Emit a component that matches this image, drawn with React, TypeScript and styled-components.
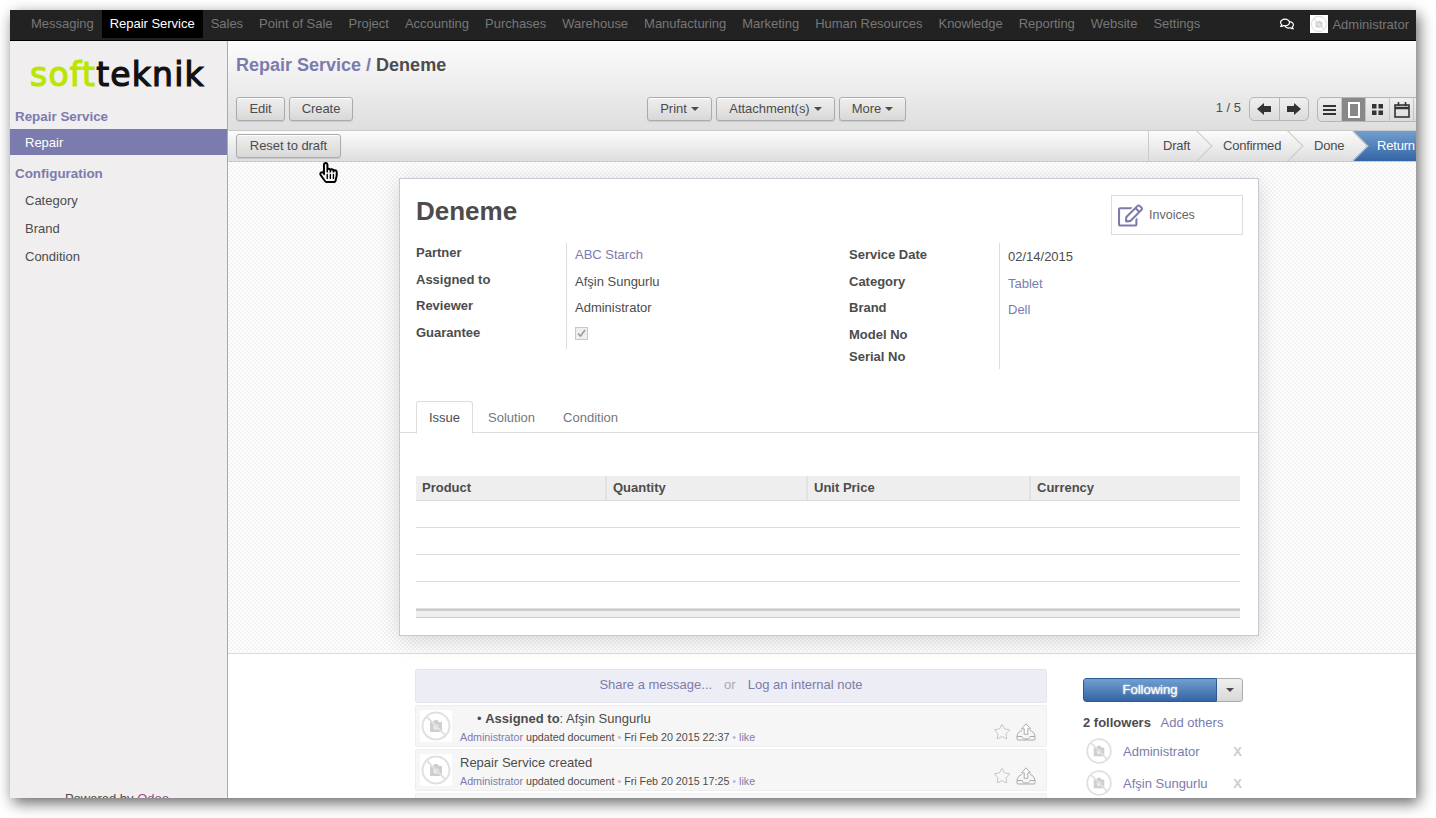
import styled, { createGlobalStyle } from "styled-components";
import { Star } from "lucide-react";
import { FaRegEdit, FaRegHandPointer, FaRegComments } from "react-icons/fa";

const GlobalStyle = createGlobalStyle`
  html, body {
    margin: 0;
    padding: 0;
    background: #fff;
  }
  body {
    font-family: "Liberation Sans", Arial, sans-serif;
    font-size: 13px;
    color: #4c4c4c;
  }
`;

const Page = styled.div`
  width: 1436px;
  height: 818px;
  padding: 10px 20px 20px 10px;
  box-sizing: border-box;
  overflow: hidden;
`;
const Frame = styled.div`
  position: relative;
  width: 1406px;
  height: 788px;
  display: flex;
  flex-direction: column;
  overflow: hidden;
  background: #fff;
`;
const FrameShadow = styled.div`
  width: 1406px;
  height: 788px;
  box-shadow: 3px 5px 14px rgba(0, 0, 0, 0.6);
`;

const TopBar = styled.div`
  height: 30px;
  flex: none;
  display: flex;
  align-items: flex-start;
  padding-left: 13px;
  background: #222;
  border-bottom: 1px solid #000;
  color: #777;
`;
const TopItem = styled.div<{ $active?: boolean }>`
  height: 28px;
  line-height: 28px;
  padding: 0 8px;
  letter-spacing: -0.02px;
  color: ${(p) => (p.$active ? "#fff" : "#777")};
  background: ${(p) => (p.$active ? "#000" : "transparent")};
`;
const TopRight = styled.div`
  margin-left: auto;
  display: flex;
  align-items: center;
  height: 28px;
  color: #777;
  padding-right: 7px;
`;
const ChatIcon = styled.span`
  display: flex;
  color: #fff;
  margin-right: 16px;
`;
const TopAvatar = styled.span`
  display: flex;
  width: 18px;
  height: 18px;
  background: #fff;
  margin-right: 4px;
`;

const Body = styled.div`
  flex: 1;
  min-height: 0;
  display: flex;
`;

const Sidebar = styled.aside`
  width: 217px;
  flex: none;
  display: flex;
  flex-direction: column;
  background: #f0eeee;
  border-right: 1px solid #aaa;
`;
const LogoBox = styled.div`
  height: 64px;
  box-sizing: border-box;
  padding: 15px 0 0 20px;
`;
const LogoText = styled.div`
  font-family: "DejaVu Sans", sans-serif;
  font-size: 33px;
  line-height: 38px;
  letter-spacing: 1.2px;
  white-space: nowrap;
  color: #111;
  -webkit-text-stroke: 1.2px currentColor;
  span {
    color: #b9e600;
  }
`;
const SideHeading = styled.div<{ $top: number }>`
  margin-top: ${(p) => p.$top}px;
  padding-left: 5px;
  height: 18px;
  line-height: 18px;
  font-size: 13.4px;
  font-weight: bold;
  color: #7c7bad;
`;
const SideItem = styled.div<{ $active?: boolean }>`
  height: ${(p) => (p.$active ? 26 : 28)}px;
  line-height: ${(p) => (p.$active ? 27 : 28)}px;
  padding-left: 15px;
  color: ${(p) => (p.$active ? "#fff" : "#4c4c4c")};
  background: ${(p) => (p.$active ? "#7c7bad" : "transparent")};
`;
const SideList = styled.div<{ $top: number }>`
  margin-top: ${(p) => p.$top}px;
`;
const Powered = styled.div`
  margin-top: auto;
  margin-bottom: -9px;
  padding-right: 3px;
  text-align: center;
  font-size: 13px;
  line-height: 16px;
  color: #4c4c4c;
  span {
    color: #a24689;
  }
`;

const Main = styled.main`
  flex: 1;
  min-width: 0;
  display: flex;
  flex-direction: column;
`;
const Header = styled.div`
  height: 90px;
  flex: none;
  box-sizing: border-box;
  padding: 13px 0 0 8px;
  background: linear-gradient(#fcfcfc, #dedede);
  border-bottom: 1px solid #cacaca;
`;
const Title = styled.h1`
  margin: 0;
  height: 22px;
  line-height: 22px;
  font-size: 18px;
  font-weight: bold;
  color: #4c4c4c;
  span {
    color: #7c7bad;
  }
  em {
    font-style: normal;
    color: #7c7bad;
  }
`;
const Toolbar = styled.div`
  margin-top: 21px;
  display: flex;
  align-items: flex-start;
`;
const Group = styled.div<{ $gap?: number; $left?: number }>`
  display: flex;
  gap: ${(p) => p.$gap ?? 4}px;
  margin-left: ${(p) => p.$left ?? 0}px;
`;
const Button = styled.button<{ $w: number }>`
  width: ${(p) => p.$w}px;
  height: 24px;
  padding: 0 0 2px;
  box-sizing: border-box;
  font: 13px "Liberation Sans", Arial, sans-serif;
  letter-spacing: -0.05px;
  color: #4c4c4c;
  border: 1px solid #ababab;
  border-radius: 3px;
  background: linear-gradient(#efefef, #d8d8d8);
  box-shadow: 0 1px 1px rgba(0, 0, 0, 0.1), inset 0 1px 0 #fff;
  white-space: nowrap;
`;
const Caret = styled.i`
  display: inline-block;
  margin-left: 4px;
  vertical-align: 2px;
  border-top: 4px solid #4c4c4c;
  border-left: 4px solid transparent;
  border-right: 4px solid transparent;
`;
const PagerText = styled.div`
  margin-left: auto;
  line-height: 22px;
  margin-right: 8px;
`;
const Pager = styled.div`
  display: flex;
  width: 60px;
  height: 24px;
  box-sizing: border-box;
  border: 1px solid #b5b5b5;
  border-radius: 5px;
  background: linear-gradient(#efefef, #dcdcdc);
  margin-right: 8px;
`;
const PagerCell = styled.div<{ $first?: boolean }>`
  flex: 1;
  display: flex;
  align-items: center;
  justify-content: center;
  color: #333;
  border-right: ${(p) => (p.$first ? "1px solid #b5b5b5" : "0")};
`;
const Views = styled.div`
  display: flex;
  height: 25px;
  box-sizing: border-box;
  border: 1px solid #b5b5b5;
  border-radius: 5px;
  margin-right: -23px;
  background: linear-gradient(#efefef, #dcdcdc);
`;
const ViewCell = styled.div<{ $active?: boolean }>`
  width: 24px;
  flex: none;
  display: flex;
  align-items: center;
  justify-content: center;
  box-sizing: border-box;
  border-right: 1px solid #c4c4c4;
  color: ${(p) => (p.$active ? "#fff" : "#333")};
  background: ${(p) => (p.$active ? "#888" : "transparent")};
  &:last-child {
    border-right: 0;
  }
`;

const StatusBar = styled.div`
  height: 31px;
  flex: none;
  box-sizing: border-box;
  display: flex;
  overflow: hidden;
  padding-left: 8px;
  background: linear-gradient(#fcfcfc, #dedede);
  border-bottom: 1px solid #cacaca;
`;
const ResetButton = styled(Button)`
  margin-top: 3px;
`;
const Steps = styled.div`
  margin-left: auto;
  margin-right: -19px;
  display: flex;
  border-left: 1px solid #cacaca;
`;
const Step = styled.div<{ $w: number; $left: number; $current?: boolean }>`
  position: relative;
  width: ${(p) => p.$w}px;
  height: 30px;
  line-height: 29px;
  flex: none;
  box-sizing: border-box;
  padding-left: ${(p) => p.$left}px;
  letter-spacing: -0.2px;
  white-space: nowrap;
  color: ${(p) => (p.$current ? "#fff" : "#4c4c4c")};
  background: ${(p) =>
    p.$current ? "linear-gradient(#729fcf, #3465a4)" : "transparent"};
  span {
    position: relative;
    z-index: 2;
  }
  &::after {
    content: ${(p) => (p.$current ? "none" : '""')};
    position: absolute;
    z-index: 1;
    top: 4px;
    right: -11px;
    width: 21px;
    height: 21px;
    transform: rotate(45deg);
    background: linear-gradient(135deg, #fafafa, #e0e0e0);
    border-top: 1px solid #cacaca;
    border-right: 1px solid #cacaca;
  }
`;

const Content = styled.div`
  height: 492px;
  flex: none;
  box-sizing: border-box;
  padding: 16px 0 0 171px;
  background: repeating-conic-gradient(#f3f3f3 0 25%, #fff 0 50%) 0 0 / 4px 4px;
  border-bottom: 1px solid #dcdcdc;
`;
const Sheet = styled.div`
  position: relative;
  width: 860px;
  height: 458px;
  box-sizing: border-box;
  background: #fff;
  border: 1px solid #c8c8d3;
  box-shadow: 0 4px 20px rgba(0, 0, 0, 0.15);
`;
const StatButton = styled.div`
  position: absolute;
  top: 16px;
  right: 15px;
  width: 132px;
  height: 40px;
  box-sizing: border-box;
  display: flex;
  align-items: center;
  gap: 6px;
  padding-left: 6px;
  border: 1px solid #ddd;
  font-size: 12.5px;
  color: #666;
  svg {
    color: #7c7bad;
  }
`;
const SheetTitle = styled.h2`
  margin: 0;
  padding: 17px 0 0 16px;
  height: 64px;
  box-sizing: border-box;
  font-size: 26px;
  line-height: 30px;
  color: #4c4c4c;
`;
const Fields = styled.div`
  display: flex;
  padding-left: 16px;
`;
const FieldGroup = styled.div<{ $w: number }>`
  width: ${(p) => p.$w}px;
  flex: none;
`;
const Row = styled.div<{ $h?: number }>`
  display: flex;
  height: ${(p) => p.$h ?? 26.5}px;
`;
const Label = styled.div<{ $w: number; $pad?: number }>`
  width: ${(p) => p.$w}px;
  flex: none;
  box-sizing: border-box;
  padding-top: ${(p) => p.$pad ?? 1}px;
  font-weight: bold;
  line-height: 18px;
  border-right: 1px solid #ddd;
`;
const Value = styled.div<{ $link?: boolean; $pad?: number }>`
  padding: ${(p) => p.$pad ?? 3}px 0 0 8px;
  line-height: 18px;
  color: ${(p) => (p.$link ? "#7c7bad" : "#4c4c4c")};
`;
const Check = styled.span`
  display: flex;
  width: 11px;
  height: 11px;
  margin-top: 3px;
  border: 1px solid #c8c8c8;
  background: #eee;
  color: #999;
`;
const Tabs = styled.div`
  display: flex;
  height: 31px;
  margin-top: 32px;
  padding-left: 16px;
  border-bottom: 1px solid #ddd;
`;
const Tab = styled.div<{ $active?: boolean }>`
  height: 31px;
  line-height: 31px;
  padding: 0 12px;
  margin-right: 2px;
  box-sizing: content-box;
  border-radius: 3px 3px 0 0;
  color: ${(p) => (p.$active ? "#4c4c4c" : "#777")};
  background: ${(p) => (p.$active ? "#fff" : "transparent")};
  border: 1px solid ${(p) => (p.$active ? "#ddd" : "transparent")};
  border-bottom: 1px solid ${(p) => (p.$active ? "#fff" : "transparent")};
`;
const Table = styled.div`
  margin: 43px 0 0 16px;
  width: 824px;
`;
const TableHead = styled.div`
  display: grid;
  grid-template-columns: 191px 201px 223px 1fr;
  height: 25px;
  box-sizing: border-box;
  background: #eee;
  border-bottom: 1px solid #ddd;
`;
const HeadCell = styled.div`
  padding-left: 6px;
  font-weight: bold;
  line-height: 23px;
  border-right: 2px solid #e2e2e2;
  &:last-child {
    border-right: 0;
  }
`;
const TableRow = styled.div`
  height: 27px;
  box-sizing: border-box;
  border-bottom: 1px solid #ddd;
`;
const TableFoot = styled.div`
  height: 9px;
  box-sizing: border-box;
  background: #eee;
  border-top: 2px solid #ccc;
  border-bottom: 1px solid #ccc;
`;

const Chatter = styled.div`
  flex: 1;
  min-height: 0;
  display: flex;
  padding: 15px 0 0 187px;
  overflow: hidden;
`;
const Thread = styled.div`
  width: 632px;
  flex: none;
`;
const Compose = styled.div`
  height: 34px;
  line-height: 30px;
  box-sizing: border-box;
  text-align: center;
  color: #aaa;
  background: #ededf6;
  border: 1px solid #e4e4ee;
  border-radius: 2px;
  a {
    color: #7c7bad;
  }
  span {
    margin: 0 12px;
  }
`;
const Message = styled.div`
  position: relative;
  height: 42px;
  box-sizing: border-box;
  display: flex;
  margin-top: 2px;
  padding: 4px 0 0 4px;
  background: #f6f6f6;
  border: 1px solid #eee;
  border-radius: 2px;
`;
const MessageAvatar = styled.div`
  width: 32px;
  height: 32px;
  flex: none;
  background: #fff;
`;
const MessageBody = styled.div`
  margin-left: 8px;
  flex: 1;
`;
const MessageText = styled.div<{ $indent?: number }>`
  height: 17px;
  line-height: 17px;
  padding-left: ${(p) => p.$indent ?? 0}px;
  color: #4c4c4c;
`;
const Meta = styled.div`
  margin-top: 3px;
  line-height: 14px;
  font-size: 10.7px;
  white-space: nowrap;
  a {
    color: #7c7bad;
  }
  i {
    font-style: normal;
    color: #b8b8d8;
  }
`;
const MessageIcons = styled.div`
  display: flex;
  align-items: center;
  gap: 5px;
  margin: 12px 10px 0 0;
  height: 20px;
  color: #b4b4b4;
`;

const Followers = styled.div`
  width: 160px;
  flex: none;
  margin: 9px 0 0 36px;
`;
const FollowButton = styled.div`
  display: flex;
  height: 24px;
  border-radius: 3px;
  overflow: hidden;
  box-sizing: border-box;
`;
const FollowMain = styled.div`
  flex: 1;
  text-align: center;
  line-height: 22px;
  color: #fff;
  text-shadow: 0 0 2px #fff;
  background: linear-gradient(#729fcf, #3465a4);
  border: 1px solid #2c5a94;
  border-radius: 3px 0 0 3px;
`;
const FollowCaret = styled.div`
  width: 26px;
  box-sizing: border-box;
  display: flex;
  align-items: center;
  justify-content: center;
  background: linear-gradient(#efefef, #d8d8d8);
  border: 1px solid #ababab;
  border-left: 0;
  border-radius: 0 3px 3px 0;
  i {
    margin-left: 0;
    vertical-align: baseline;
  }
`;
const FollowHead = styled.div`
  margin-top: 13px;
  line-height: 16px;
  font-weight: bold;
  white-space: nowrap;
  a {
    margin-left: 6px;
    font-weight: normal;
    color: #7c7bad;
  }
`;
const Follower = styled.div`
  display: flex;
  align-items: center;
  height: 32px;
  padding-left: 2px;
  a {
    margin-left: 10px;
    color: #7c7bad;
  }
`;
const FollowerList = styled.div`
  margin-top: 4px;
`;
const Remove = styled.span`
  margin-left: auto;
  padding-right: 1px;
  font-size: 13px;
  font-weight: bold;
  color: #ccc;
`;
const Cursor = styled.span`
  position: absolute;
  left: 308px;
  top: 152px;
  z-index: 5;
  display: flex;
  color: #000;
`;

function NoPhoto({ size }: { size: number }) {
  return (
    <svg width={size} height={size} viewBox="0 0 32 32">
      <circle cx="16" cy="16" r="13.5" fill="#fff" stroke="#e0e0e0" strokeWidth="2" />
      <path d="M10 12h3l1.500-2h3l1.500 2h3v10H10z" fill="#cfcfcf" />
      <circle cx="16" cy="17" r="2.600" fill="#eee" />
      <path d="M7 7l18 18" stroke="#e0e0e0" strokeWidth="2" />
    </svg>
  );
}

function ShareIcon() {
  return (
    <svg width="20" height="18" viewBox="0 0 20 18" fill="none" stroke="#aaa">
      <path d="M10 .8l4.500 5h-2.700v5.500H8.200V5.800H5.500z" fill="#fff" />
      <path d="M6 7.500C3.500 8 1.500 10 1 13.500v2.500c0 .6.400 1 1 1h16c.6 0 1-.4 1-1v-2.500C18.500 10 16.500 8 14 7.500" />
      <path d="M1 13.500h5c.5 2 2 2.500 4 2.500s3.500-.5 4-2.500h5" />
    </svg>
  );
}

function ArrowIcon({ dir }: { dir: "left" | "right" }) {
  return (
    <svg width="14" height="12" viewBox="0 0 14 12" fill="currentColor">
      {dir === "left" ? (
        <path d="M0 6l7-6v3h7v6H7v3z" />
      ) : (
        <path d="M14 6L7 0v3H0v6h7v3z" />
      )}
    </svg>
  );
}

function ListIcon() {
  return (
    <svg width="13" height="12" viewBox="0 0 13 12" fill="currentColor">
      <path d="M0 1h13v2H0zM0 5h13v2H0zM0 9h13v2H0z" />
    </svg>
  );
}

function FormIcon() {
  return (
    <svg width="12" height="16" viewBox="0 0 12 16" fill="none" stroke="currentColor" strokeWidth="2">
      <rect x="1" y="1" width="10" height="14" />
    </svg>
  );
}

function KanbanIcon() {
  return (
    <svg width="11" height="11" viewBox="0 0 11 11" fill="currentColor">
      <path d="M0 0h4.500v4.500H0zM6.500 0H11v4.500H6.500zM0 6.500h4.500V11H0zM6.500 6.500H11V11H6.500z" />
    </svg>
  );
}

function CalendarIcon() {
  return (
    <svg width="16" height="16" viewBox="0 0 16 16" fill="none" stroke="currentColor">
      <rect x="1" y="3" width="14" height="12" strokeWidth="1.600" />
      <path d="M1 6h14" strokeWidth="2.500" />
      <path d="M4.500 0v4M11.500 0v4" strokeWidth="1.600" />
    </svg>
  );
}

const menus = [
  "Messaging",
  "Repair Service",
  "Sales",
  "Point of Sale",
  "Project",
  "Accounting",
  "Purchases",
  "Warehouse",
  "Manufacturing",
  "Marketing",
  "Human Resources",
  "Knowledge",
  "Reporting",
  "Website",
  "Settings",
];

const messages = [
  { id: 1, indent: 17, time: "Fri Feb 20 2015 22:37" },
  { id: 2, indent: 0, time: "Fri Feb 20 2015 17:25" },
];

export default function App() {
  return (
    <>
      <GlobalStyle />
      <Page>
        <FrameShadow>
          <Frame>
            <TopBar>
              {menus.map((m) => (
                <TopItem key={m} $active={m === "Repair Service"}>
                  {m}
                </TopItem>
              ))}
              <TopRight>
                <ChatIcon>
                  <FaRegComments size={14} />
                </ChatIcon>
                <TopAvatar>
                  <NoPhoto size={18} />
                </TopAvatar>
                Administrator
              </TopRight>
            </TopBar>
            <Body>
              <Sidebar>
                <LogoBox>
                  <LogoText>
                    <span>soft</span>teknik
                  </LogoText>
                </LogoBox>
                <SideHeading $top={3}>Repair Service</SideHeading>
                <SideList $top={3}>
                  <SideItem $active>Repair</SideItem>
                </SideList>
                <SideHeading $top={10}>Configuration</SideHeading>
                <SideList $top={4}>
                  <SideItem>Category</SideItem>
                  <SideItem>Brand</SideItem>
                  <SideItem>Condition</SideItem>
                </SideList>
                <Powered>
                  Powered by <span>Odoo</span>
                </Powered>
              </Sidebar>
              <Main>
                <Header>
                  <Title>
                    <span>Repair Service</span> <em>/</em> Deneme
                  </Title>
                  <Toolbar>
                    <Group>
                      <Button $w={49}>Edit</Button>
                      <Button $w={64}>Create</Button>
                    </Group>
                    <Group $left={294}>
                      <Button $w={65}>
                        Print
                        <Caret />
                      </Button>
                      <Button $w={119}>
                        Attachment(s)
                        <Caret />
                      </Button>
                      <Button $w={67}>
                        More
                        <Caret />
                      </Button>
                    </Group>
                    <PagerText>1 / 5</PagerText>
                    <Pager>
                      <PagerCell $first>
                        <ArrowIcon dir="left" />
                      </PagerCell>
                      <PagerCell>
                        <ArrowIcon dir="right" />
                      </PagerCell>
                    </Pager>
                    <Views>
                      <ViewCell>
                        <ListIcon />
                      </ViewCell>
                      <ViewCell $active>
                        <FormIcon />
                      </ViewCell>
                      <ViewCell>
                        <KanbanIcon />
                      </ViewCell>
                      <ViewCell>
                        <CalendarIcon />
                      </ViewCell>
                      <ViewCell />
                    </Views>
                  </Toolbar>
                </Header>
                <StatusBar>
                  <ResetButton $w={105}>Reset to draft</ResetButton>
                  <Steps>
                    <Step $w={48} $left={14}>
                      <span>Draft</span>
                    </Step>
                    <Step $w={91} $left={26}>
                      <span>Confirmed</span>
                    </Step>
                    <Step $w={65} $left={26}>
                      <span>Done</span>
                    </Step>
                    <Step $w={82} $left={24} $current>
                      <span>Return</span>
                    </Step>
                  </Steps>
                </StatusBar>
                <Content>
                  <Sheet>
                    <StatButton>
                      <FaRegEdit size={25} />
                      Invoices
                    </StatButton>
                    <SheetTitle>Deneme</SheetTitle>
                    <Fields>
                      <FieldGroup $w={433}>
                        <Row>
                          <Label $w={151}>Partner</Label>
                          <Value $link>ABC Starch</Value>
                        </Row>
                        <Row>
                          <Label $w={151}>Assigned to</Label>
                          <Value>Afşin Sungurlu</Value>
                        </Row>
                        <Row>
                          <Label $w={151}>Reviewer</Label>
                          <Value>Administrator</Value>
                        </Row>
                        <Row>
                          <Label $w={151}>Guarantee</Label>
                          <Value $pad={1}>
                            <Check>
                              <svg width="11" height="11" viewBox="0 0 11 11" fill="none" stroke="currentColor" strokeWidth="1.500">
                                <path d="M2 5.500l2.500 2.500L9 2" />
                              </svg>
                            </Check>
                          </Value>
                        </Row>
                      </FieldGroup>
                      <FieldGroup $w={391}>
                        <Row>
                          <Label $w={151} $pad={3}>Service Date</Label>
                          <Value $pad={5}>02/14/2015</Value>
                        </Row>
                        <Row>
                          <Label $w={151} $pad={3}>Category</Label>
                          <Value $link $pad={5}>Tablet</Value>
                        </Row>
                        <Row>
                          <Label $w={151} $pad={3}>Brand</Label>
                          <Value $link $pad={5}>Dell</Value>
                        </Row>
                        <Row $h={22}>
                          <Label $w={151} $pad={3}>Model No</Label>
                        </Row>
                        <Row $h={24}>
                          <Label $w={151} $pad={3}>Serial No</Label>
                        </Row>
                      </FieldGroup>
                    </Fields>
                    <Tabs>
                      <Tab $active>Issue</Tab>
                      <Tab>Solution</Tab>
                      <Tab>Condition</Tab>
                    </Tabs>
                    <Table>
                      <TableHead>
                        <HeadCell>Product</HeadCell>
                        <HeadCell>Quantity</HeadCell>
                        <HeadCell>Unit Price</HeadCell>
                        <HeadCell>Currency</HeadCell>
                      </TableHead>
                      <TableRow />
                      <TableRow />
                      <TableRow />
                      <TableRow />
                      <TableFoot />
                    </Table>
                  </Sheet>
                </Content>
                <Chatter>
                  <Thread>
                    <Compose>
                      <a>Share a message...</a>
                      <span>or</span>
                      <a>Log an internal note</a>
                    </Compose>
                    {messages.map((m) => (
                      <Message key={m.id}>
                        <MessageAvatar>
                          <NoPhoto size={32} />
                        </MessageAvatar>
                        <MessageBody>
                          <MessageText $indent={m.indent}>
                            {m.id === 1 ? (
                              <>
                                • <b>Assigned to</b>: Afşin Sungurlu
                              </>
                            ) : (
                              "Repair Service created"
                            )}
                          </MessageText>
                          <Meta>
                            <a>Administrator</a> updated document <i>•</i> {m.time} <i>•</i> <a>like</a>
                          </Meta>
                        </MessageBody>
                        <MessageIcons>
                          <Star size={18} strokeWidth={1} />
                          <ShareIcon />
                        </MessageIcons>
                      </Message>
                    ))}
                    <Message />
                  </Thread>
                  <Followers>
                    <FollowButton>
                      <FollowMain>Following</FollowMain>
                      <FollowCaret>
                        <Caret />
                      </FollowCaret>
                    </FollowButton>
                    <FollowHead>
                      2 followers <a>Add others</a>
                    </FollowHead>
                    <FollowerList>
                      <Follower>
                        <NoPhoto size={28} />
                        <a>Administrator</a>
                        <Remove>X</Remove>
                      </Follower>
                      <Follower>
                        <NoPhoto size={28} />
                        <a>Afşin Sungurlu</a>
                        <Remove>X</Remove>
                      </Follower>
                    </FollowerList>
                  </Followers>
                </Chatter>
              </Main>
            </Body>
            <Cursor>
              <FaRegHandPointer size={21} />
            </Cursor>
          </Frame>
        </FrameShadow>
      </Page>
    </>
  );
}
